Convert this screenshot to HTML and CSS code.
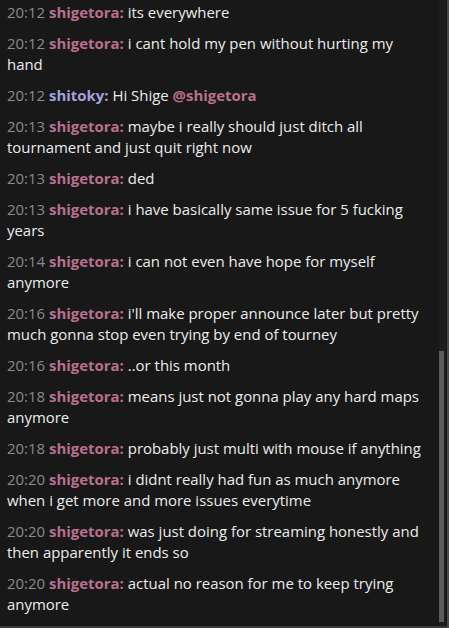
FILE: index.html
```html
<!DOCTYPE html>
<html lang="en">
<head>
    <meta charset="UTF-8">
    <meta name="viewport" content="width=device-width, initial-scale=1.0">
    <title>Chat</title>
    <link rel="stylesheet" href="styles.css">
</head>
<body>
    <div class="chat">
        <div class="messages">
            <div class="msg"><span class="time">20:12</span> <span class="name">shigetora:</span> its everywhere</div>
            <div class="msg"><span class="time">20:12</span> <span class="name">shigetora:</span> i cant hold my pen without hurting my hand</div>
            <div class="msg"><span class="time">20:12</span> <span class="name blue">shitoky:</span> Hi Shige <span class="mention">@shigetora</span></div>
            <div class="msg"><span class="time">20:13</span> <span class="name">shigetora:</span> maybe i really should just ditch all tournament and just quit right now</div>
            <div class="msg"><span class="time">20:13</span> <span class="name">shigetora:</span> ded</div>
            <div class="msg"><span class="time">20:13</span> <span class="name">shigetora:</span> i have basically same issue for 5 fucking years</div>
            <div class="msg"><span class="time">20:14</span> <span class="name">shigetora:</span> i can not even have hope for myself anymore</div>
            <div class="msg"><span class="time">20:16</span> <span class="name">shigetora:</span> i'll make proper announce later but pretty much gonna stop even trying by end of tourney</div>
            <div class="msg"><span class="time">20:16</span> <span class="name">shigetora:</span> ..or this month</div>
            <div class="msg"><span class="time">20:18</span> <span class="name">shigetora:</span> means just not gonna play any hard maps anymore</div>
            <div class="msg"><span class="time">20:18</span> <span class="name">shigetora:</span> probably just multi with mouse if anything</div>
            <div class="msg"><span class="time">20:20</span> <span class="name">shigetora:</span> i didnt really had fun as much anymore when i get more and more issues everytime</div>
            <div class="msg"><span class="time">20:20</span> <span class="name">shigetora:</span> was just doing for streaming honestly and then apparently it ends so</div>
            <div class="msg"><span class="time">20:20</span> <span class="name">shigetora:</span> actual no reason for me to keep trying anymore</div>
        </div>
        <div class="scrollbar">
            <div class="thumb"></div>
        </div>
    </div>
</body>
</html>
```

FILE: styles.css
```css
body {
    margin: 0;
    background-color: #181818;
    font-family: "Open Sans", "Noto Sans", sans-serif;
    overflow: hidden;
}
.chat {
    display: flex;
    height: 626px;
    border-bottom: 2px solid #3a3a3a;
    border-right: 2px solid #4a4a4a;
    width: 447px;
}
.messages {
    flex: 1;
    padding: 2px 16px 0 7px;
    font-size: 14.95px;
    line-height: 21px;
    color: #ececec;
}
.msg {
    margin-bottom: 10px;
}
.time {
    color: #8a8a8a;
}
.name {
    color: #b9708f;
    font-weight: 700;
}
.name.blue {
    color: #a4a2e0;
}
.mention {
    color: #b9708f;
    font-weight: 700;
}
.scrollbar {
    width: 7px;
    background-color: #1d1d1d;
    margin-right: 1px;
}
.thumb {
    margin-top: 351px;
    height: 271px;
    width: 5px;
    background-color: #5c5c5c;
}
```
